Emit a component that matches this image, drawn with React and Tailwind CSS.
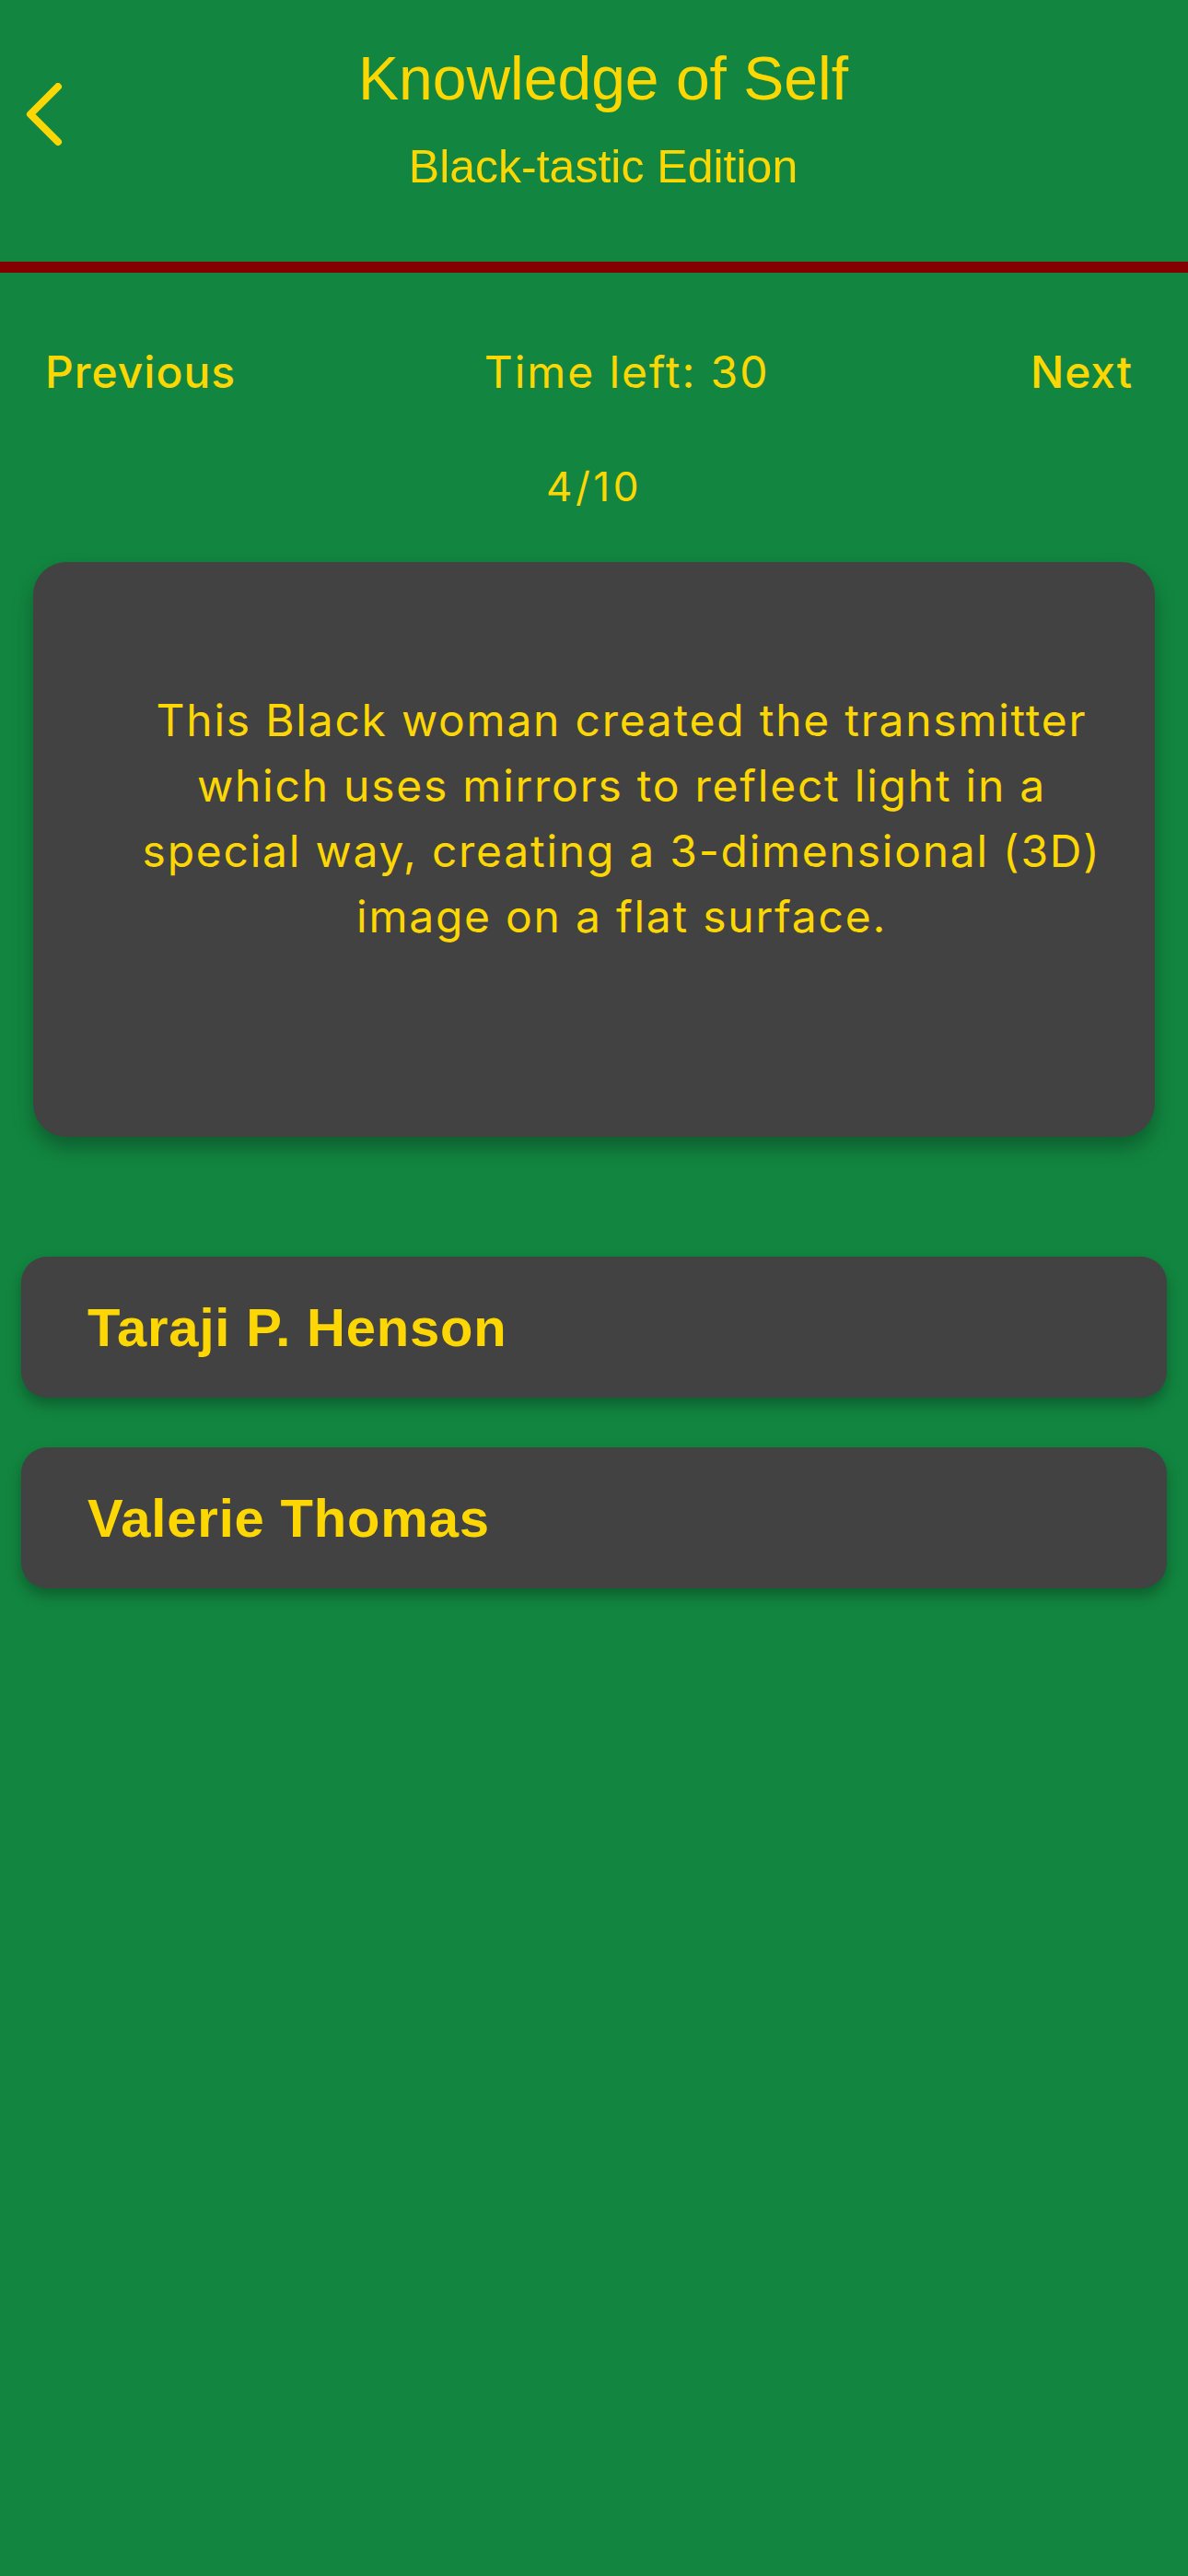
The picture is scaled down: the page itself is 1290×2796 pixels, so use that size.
const answers = ['Taraji P. Henson', 'Valerie Thomas'];

const BackChevron = () => (
    <svg width="44" height="72" viewBox="0 0 44 72" fill="none">
        <path d="M36 4 L6 34 L36 64" stroke="#FFD700" strokeWidth="8" strokeLinecap="round" strokeLinejoin="round" />
    </svg>
);

const App = () => {
    return (
        <div className="min-h-[2796px] w-[1290px] bg-[#128640] text-[#FFD700] font-['Liberation_Sans',Arial,sans-serif]">
            {/* Header */}
            <div className="relative flex flex-col items-center pl-[20px] pt-[45px] pb-[73px]">
                <button className="absolute left-[27px] top-[90px]">
                    <BackChevron />
                </button>
                <h1 className="text-[66px] leading-[80px]">Knowledge of Self</h1>
                <p className="mt-[26px] text-[50px] leading-[60px]">Black-tastic Edition</p>
            </div>
            <div className="h-[12px] bg-[#850000]" />

            {/* Nav row */}
            <div className="mt-[78px] flex items-center justify-between pl-[49px] pr-[60px] font-['Inter',sans-serif] text-[48px] leading-[60px]">
                <button className="font-medium tracking-[1px]">Previous</button>
                <span className="mr-[14px] tracking-[1.9px]">Time left: 30</span>
                <button className="font-medium tracking-[0.9px]">Next</button>
            </div>
            <div className="mt-[67px] text-center font-['Inter',sans-serif] text-[44px] leading-[54px] tracking-[3.5px]">4/10</div>

            {/* Question card */}
            <div className="mx-[36px] mt-[55px] h-[624px] rounded-[36px] bg-[#424242] pl-[104px] pr-[44px] pt-[136px] shadow-[0_12px_22px_rgba(0,0,0,0.3)]">
                <p className="text-center font-['Inter',sans-serif] text-[48px] leading-[71px] tracking-[1.75px]">
                    This Black woman created the transmitter which uses mirrors to reflect light in a special way, creating a 3-dimensional (3D) image on a flat surface.
                </p>
            </div>

            {/* Answers */}
            <div className="mt-[130px] flex flex-col gap-[54px] px-[23px]">
                {answers.map((a) => (
                    <button
                        key={a}
                        className="flex h-[153px] items-center rounded-[28px] bg-[#424242] pl-[72px] text-left text-[58px] font-bold tracking-[0.8px] shadow-[0_8px_16px_rgba(0,0,0,0.3)]"
                    >
                        {a}
                    </button>
                ))}
            </div>
        </div>
    );
};

export default App;
